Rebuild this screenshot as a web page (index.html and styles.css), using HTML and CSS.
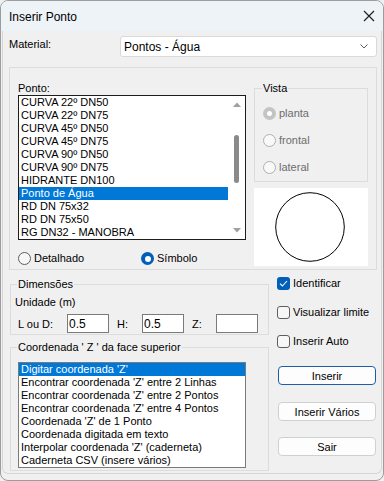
FILE: index.html
```html
<!DOCTYPE html>
<html lang="pt">
<head>
    <meta charset="UTF-8">
    <title>Inserir Ponto</title>
    <link rel="stylesheet" href="styles.css">
</head>
<body>
    <div class="window">
        <div class="titlebar">
            <span class="title">Inserir Ponto</span>
            <svg class="close" width="12" height="12" viewBox="0 0 12 12">
                <path d="M1 1 L11 11 M11 1 L1 11" stroke="#1a1a1a" stroke-width="1.1" fill="none"/>
            </svg>
        </div>
        <div class="client">
            <div class="material-row">
                <span class="lbl">Material:</span>
                <div class="combo">
                    <span>Pontos - Água</span>
                    <svg class="chevron" width="8" height="5" viewBox="0 0 8 5">
                        <path d="M0.5 0.5 L4 4 L7.5 0.5" stroke="#606060" stroke-width="1" fill="none"/>
                    </svg>
                </div>
            </div>

            <div class="ponto-box">
                <div class="ponto-col">
                    <div class="caption">Ponto:</div>
                    <div class="listbox ponto-list">
                        <ul class="items">
                            <li>CURVA 22º DN50</li>
                            <li>CURVA 22º DN75</li>
                            <li>CURVA 45º DN50</li>
                            <li>CURVA 45º DN75</li>
                            <li>CURVA 90º DN50</li>
                            <li>CURVA 90º DN75</li>
                            <li>HIDRANTE DN100</li>
                            <li class="selected">Ponto de Água</li>
                            <li>RD DN 75x32</li>
                            <li>RD DN 75x50</li>
                            <li>RG DN32 - MANOBRA</li>
                        </ul>
                        <div class="vscroll">
                            <div class="arrow">
                                <svg width="8" height="5" viewBox="0 0 8 5"><path d="M0 5 L4 0.5 L8 5 Z" fill="#a0a0a0"/></svg>
                            </div>
                            <div class="track"><div class="thumb"></div></div>
                            <div class="arrow">
                                <svg width="8" height="5" viewBox="0 0 8 5"><path d="M0 0 L4 4.5 L8 0 Z" fill="#a0a0a0"/></svg>
                            </div>
                        </div>
                    </div>
                    <div class="modo-row">
                        <label class="radio detalhado"><span class="dot"></span>Detalhado</label>
                        <label class="radio"><span class="dot on"></span>Símbolo</label>
                    </div>
                </div>
                <div class="vista-col">
                    <fieldset class="group vista">
                        <legend>Vista</legend>
                        <label class="radio off"><span class="dot gray-on"></span>planta</label>
                        <label class="radio off"><span class="dot gray"></span>frontal</label>
                        <label class="radio off"><span class="dot gray"></span>lateral</label>
                    </fieldset>
                    <div class="preview">
                        <svg width="114" height="78" viewBox="0 0 114 78">
                            <circle cx="56" cy="39" r="34.3" stroke="#000" stroke-width="1" fill="none"/>
                        </svg>
                    </div>
                </div>
            </div>

            <div class="lower">
                <div class="lower-left">
                    <fieldset class="group dims">
                        <legend>Dimensões</legend>
                        <div class="unidade">Unidade (m)</div>
                        <div class="dims-row">
                            <span class="dl dl-l">L ou D:</span>
                            <input class="field" type="text" value="0.5">
                            <span class="dl dl-h">H:</span>
                            <input class="field" type="text" value="0.5">
                            <span class="dl dl-z">Z:</span>
                            <input class="field" type="text" value="">
                        </div>
                    </fieldset>
                    <fieldset class="group coord">
                        <legend>Coordenada ' Z ' da face superior</legend>
                        <ul class="listbox coord-list">
                            <li class="selected">Digitar coordenada 'Z'</li>
                            <li>Encontrar coordenada 'Z' entre 2 Linhas</li>
                            <li>Encontrar coordenada 'Z' entre 2 Pontos</li>
                            <li>Encontrar coordenada 'Z' entre 4 Pontos</li>
                            <li>Coordenada 'Z' de 1 Ponto</li>
                            <li>Coordenada digitada em texto</li>
                            <li>Interpolar coordenada 'Z' (caderneta)</li>
                            <li>Caderneta CSV (insere vários)</li>
                        </ul>
                    </fieldset>
                </div>
                <div class="lower-right">
                    <label class="check">
                        <span class="box on">
                            <svg width="9" height="7" viewBox="0 0 9 7"><path d="M1 3.6 L3.4 6 L8 1" stroke="#fff" stroke-width="1.1" fill="none"/></svg>
                        </span>Identificar
                    </label>
                    <label class="check"><span class="box"></span>Visualizar limite</label>
                    <label class="check"><span class="box"></span>Inserir Auto</label>
                    <button class="btn default">Inserir</button>
                    <button class="btn btn-varios">Inserir Vários</button>
                    <button class="btn btn-sair">Sair</button>
                </div>
            </div>
        </div>
    </div>
</body>
</html>
```

FILE: styles.css
```css
* {
    box-sizing: border-box;
}
body {
    margin: 0;
    background: #f0f0f0;
    font-family: "Liberation Sans", Arial, sans-serif;
    font-size: 11px;
    color: #000;
}
.window {
    width: 384px;
    height: 481px;
    border: 1px solid #9c9c9c;
    border-radius: 8px;
    background: #f0f0f0;
    overflow: hidden;
}
.titlebar {
    height: 30px;
    background: #eef3f8;
    display: flex;
    align-items: center;
    padding-left: 8px;
}
.title {
    font-size: 12px;
    padding-top: 1px;
}
.close {
    margin-left: auto;
    margin-right: 8px;
}
.client {
    height: 443px;
    margin: 0 1px;
    border: 1px solid #d6d6d6;
    border-top: none;
    border-radius: 0 0 6px 6px;
    padding: 5px 4px 0 6px;
}

/* linha do material */
.material-row {
    display: flex;
    height: 21px;
}
.lbl {
    line-height: 13px;
    padding-top: 2px;
}
.combo {
    margin-left: auto;
    width: 257px;
    height: 21px;
    background: #fff;
    border: 1px solid #d9d9d9;
    border-radius: 3px;
    display: flex;
    align-items: center;
    padding: 0 8px 0 3px;
    font-size: 12px;
}
.chevron {
    margin-left: auto;
}

/* caixa do ponto */
.ponto-box {
    margin-top: 10px;
    height: 203px;
    border: 1px solid #dcdcdc;
    display: flex;
    gap: 8px;
    padding: 14px 8px 0 8px;
}
.ponto-col {
    width: 228px;
}
.caption {
    line-height: 13px;
}
.listbox {
    background: #fff;
    margin: 0;
    list-style: none;
}
.items {
    list-style: none;
    margin: 0;
    padding: 0;
    flex: 1;
    overflow: hidden;
}
.items li,
.coord-list li {
    height: 13px;
    line-height: 13px;
    padding-left: 2px;
    white-space: nowrap;
}
li.selected {
    background: #0078d7;
    color: #fff;
}
.ponto-list {
    height: 145px;
    border: 1px solid #1c1c1c;
    display: flex;
}
.vscroll {
    width: 17px;
    display: flex;
    flex-direction: column;
    align-items: center;
}
.arrow {
    height: 17px;
    display: flex;
    align-items: center;
    justify-content: center;
}
.track {
    flex: 1;
}
.thumb {
    width: 5px;
    height: 48px;
    margin-top: 22px;
    border-radius: 3px;
    background: #8a8a8a;
}
.modo-row {
    display: flex;
    margin-top: 12px;
}
.radio {
    display: flex;
    align-items: center;
    gap: 3px;
    height: 13px;
    line-height: 13px;
}
.detalhado {
    width: 123px;
}
.dot {
    width: 13px;
    height: 13px;
    border-radius: 50%;
    border: 1px solid #5e5e5e;
    background: #f7f7f7;
    display: flex;
    align-items: center;
    justify-content: center;
}
.dot.on {
    border: none;
    background: #005fb8;
}
.dot.on::after {
    content: "";
    width: 6px;
    height: 6px;
    border-radius: 50%;
    background: #fff;
}
.dot.gray-on {
    border: none;
    background: #c4c4c4;
}
.dot.gray-on::after {
    content: "";
    width: 5px;
    height: 5px;
    border-radius: 50%;
    background: #fff;
}
.dot.gray {
    border-color: #b0b0b0;
    background: #f9f9f9;
}
.radio.off {
    color: #6d6d6d;
}

/* grupos */
.group {
    margin: 0;
    border: 1px solid #dcdcdc;
    min-width: 0;
}
.group legend {
    line-height: 13px;
    padding: 0 1px;
}
.vista-col {
    width: 114px;
}
.vista {
    height: 100px;
    padding: 12px 0 0 8px;
    display: flex;
    flex-direction: column;
    gap: 14px;
}
.vista legend {
    margin-left: -1px;
}
.preview {
    margin-top: 6px;
    height: 78px;
    background: #fff;
}
.preview svg {
    display: block;
}

/* parte de baixo */
.lower {
    display: flex;
}
.lower-left {
    width: 259px;
    margin-left: 1px;
}
.dims {
    margin-top: 8px;
    height: 57px;
    padding: 5px 0 0 4px;
}
.dims legend {
    margin-left: 2px;
}
.unidade {
    line-height: 13px;
}
.dims-row {
    display: flex;
    align-items: center;
    margin-top: 5px;
    padding-left: 3px;
}
.dl-l {
    width: 49px;
}
.dl-h {
    width: 25px;
    margin-left: 8px;
}
.dl-z {
    width: 24px;
    margin-left: 8px;
}
.field {
    width: 42px;
    height: 19px;
    border: 1px solid #7a7a7a;
    background: #fff;
    font-family: "Liberation Sans", Arial, sans-serif;
    font-size: 12px;
    padding: 0 0 0 1px;
    margin: 0;
    outline: none;
}
.coord {
    margin-top: 6px;
    height: 130px;
    padding: 8px 0 0 4px;
}
.coord legend {
    margin-left: 2px;
}
.coord-list {
    width: 228px;
    height: 106px;
    margin-left: 3px;
    padding: 0;
    border: 1px solid #7a7a7a;
    overflow: hidden;
}
.lower-right {
    width: 100px;
    margin-left: 8px;
    padding-top: 7px;
    display: flex;
    flex-direction: column;
}
.check {
    display: flex;
    align-items: center;
    gap: 3px;
    height: 13px;
    line-height: 13px;
    margin-bottom: 16px;
}
.box {
    width: 13px;
    height: 13px;
    border: 1px solid #5e5e5e;
    border-radius: 3px;
    background: #f7f7f7;
    display: flex;
    align-items: center;
    justify-content: center;
}
.box.on {
    border: none;
    background: #005fb8;
}
.btn {
    width: 98px;
    height: 19px;
    margin: 2px 0 0 1px;
    padding: 0;
    background: #fdfdfd;
    border: 1px solid #d0d0d0;
    border-radius: 4px;
    font-family: "Liberation Sans", Arial, sans-serif;
    font-size: 11px;
    color: #000;
}
.btn.default {
    border-color: #1a5fa8;
}
.btn-varios {
    margin-top: 17px;
}
.btn-sair {
    margin-top: 16px;
}
```
